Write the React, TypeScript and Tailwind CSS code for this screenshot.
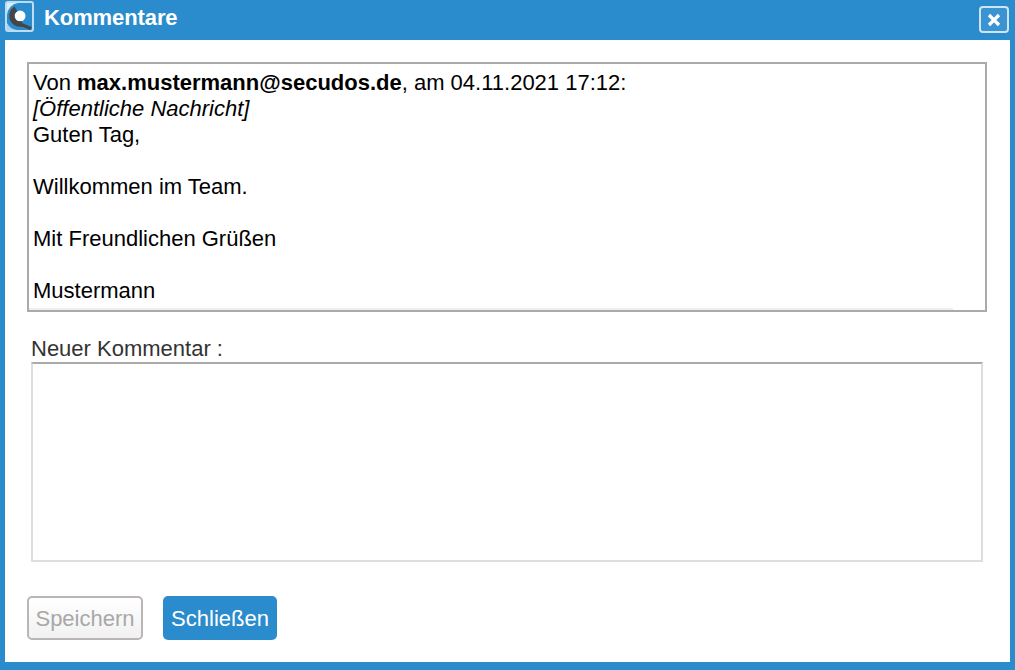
const sans = { fontFamily: '"Liberation Sans", Arial, sans-serif' };

function Logo() {
  return (
    <svg width="30" height="32" viewBox="0 0 30 32" className="shrink-0">
      <rect x="1" y="1" width="27" height="29" rx="2" fill="#2b8ccd" stroke="#bcdcf1" strokeWidth="2" />
      <path d="M2 2 H13 A13 13 0 0 0 2 14 Z" fill="#dcecf7" />
      <path d="M2 22 V29 H12 A13 13 0 0 1 2 22 Z" fill="#a9d2ec" />
      <circle cx="15" cy="15" r="7" fill="#ffffff" />
      <circle cx="15" cy="15" r="8" fill="none" stroke="#2b8ccd" strokeWidth="5" />
      <path d="M11 8 A8 8 0 0 0 15 23 L17 23" fill="none" stroke="#45464a" strokeWidth="5.5" />
      <path d="M15 23 L26 27.5" stroke="#45464a" strokeWidth="3.5" />
    </svg>
  );
}

export default function App() {
  return (
    <div className="w-[1015px] h-[670px] bg-[#2b8ccd] flex flex-col overflow-hidden" style={sans}>
      <div className="h-[40px] shrink-0 flex items-start pl-[5px] pr-[6px] pt-[1px]">
        <Logo />
        <div className="ml-[9px] mt-[4px] text-[22px] leading-[26px] font-bold text-white tracking-[-0.1px]">Kommentare</div>
        <button className="ml-auto mt-[5px] w-[30px] h-[27px] rounded-[4px] border-[2px] border-[#cfe5f5] bg-[#3a94d2] flex items-center justify-center">
          <svg width="14" height="14" viewBox="0 0 14 14">
            <path d="M2 2 L12 12 M12 2 L2 12" stroke="#fff" strokeWidth="3.2" />
          </svg>
        </button>
      </div>
      <div className="mx-[5px] h-[622px] bg-white pt-[22px] pl-[22px] pr-[23px] flex flex-col">
        <div className="h-[250px] border-[2px] border-[#aaaaaa] flex flex-col text-[22px] leading-[26px] text-black">
          <div className="flex-1 px-[4px] pt-[6px]">
            <div>Von <b>max.mustermann@secudos.de</b>, am 04.11.2021 17:12:</div>
            <div><i>[Öffentliche Nachricht]</i></div>
            <div>Guten Tag,</div>
            <div className="h-[26px]" />
            <div>Willkommen im Team.</div>
            <div className="h-[26px]" />
            <div>Mit Freundlichen Grüßen</div>
            <div className="h-[26px]" />
            <div>Mustermann</div>
          </div>
          <div className="h-[2px] w-[924px] bg-[#eeeeee]" />
        </div>
        <label className="block ml-[4px] mt-[24px] text-[22px] leading-[26px] text-[#333333]">Neuer Kommentar :</label>
        <div className="mx-[4px] h-[200px] border-[2px] border-[#dddddd] border-t-[#aaaaaa]" />
        <div className="mt-[34px] flex gap-[20px]">
          <button className="w-[116px] h-[44px] rounded-[5px] border-[2px] border-[#bbb5b5] bg-gradient-to-b from-white to-[#f1f1f1] text-[22px] text-[#a8a8a8]">Speichern</button>
          <button className="w-[114px] h-[44px] rounded-[5px] bg-[#2b8ccd] text-[22px] text-white">Schließen</button>
        </div>
      </div>
    </div>
  );
}
